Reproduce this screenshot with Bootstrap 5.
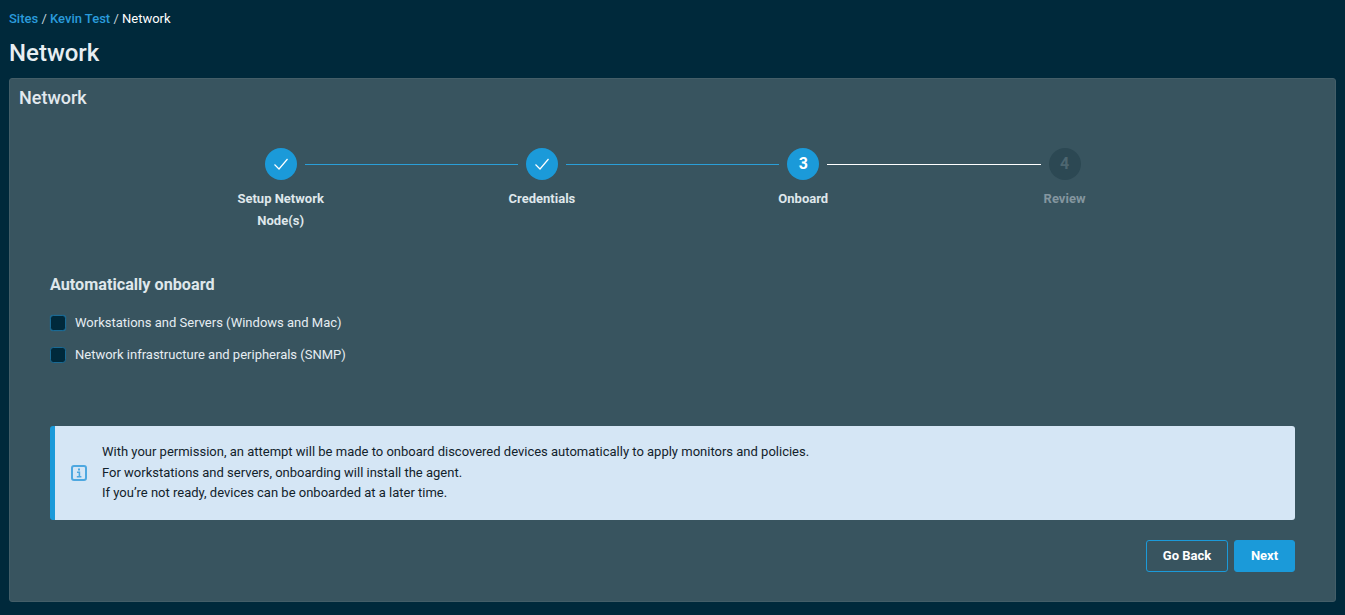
<!DOCTYPE html>
<html>

<head>
  <meta charset="utf-8">
  <meta name="viewport" content="width=device-width">
  <title>Network</title>
  <link href="https://cdn.jsdelivr.net/npm/bootstrap@5.3.2/dist/css/bootstrap.min.css" rel="stylesheet" type="text/css" />
  <script src="https://cdn.jsdelivr.net/npm/bootstrap@5.3.2/dist/js/bootstrap.bundle.min.js"></script>
  <style>
    html, body {
      height: 100%;
    }

    body {
      background: #00293b;
      color: #e6edf2;
      font-family: Roboto, sans-serif;
      font-size: 13px;
      overflow: hidden;
    }

    .page-wrap {
      padding: 9px 9px 0;
    }

    .crumbs {
      height: 19px;
      line-height: 19px;
      margin-bottom: 11px;
      color: #c4d2da;
    }

    .crumbs a {
      color: #2a9bdc;
      text-decoration: none;
      font-weight: 500;
    }

    .crumbs span {
      color: #fff;
      font-weight: 400;
    }

    .page-title {
      font-size: 24px;
      font-weight: 500;
      line-height: 28px;
      margin: 0 0 11px;
      color: #e8eef2;
    }

    .net-panel {
      background: #38545f;
      border: 1px solid #445e68;
      border-radius: 3px;
      height: 524px;
      padding: 8px 40px 0 9px;
      color: #e6edf2;
    }

    .panel-title {
      font-size: 18px;
      font-weight: 500;
      line-height: 22px;
      margin: 0;
      color: #e2e9ee;
    }

    .step-wrap {
      width: 1044px;
      margin-left: 131px;
    }

    .step-track {
      padding: 39px 113.5px 0 115px;
    }

    .step-dot {
      width: 32px;
      height: 32px;
      border-radius: 50%;
      background: #1b9ad9;
      color: #fff;
      font-size: 16px;
      font-weight: 700;
      flex-shrink: 0;
    }

    .step-dot.todo {
      background: #2c4853;
      color: #4d6670;
    }

    .step-line {
      height: 1px;
      margin: 0 8px;
      background: #2a9fd8;
    }

    .step-line.now {
      background: #fff;
    }

    .step-names {
      display: grid;
      grid-template-columns: repeat(4, 261.3px);
      margin-top: 8px;
      text-align: center;
      font-weight: 700;
      line-height: 22px;
      color: #dfe7eb;
    }

    .step-names div {
      width: 110px;
      margin: 0 auto;
    }

    .step-names .off {
      color: #84969f;
    }

    .onboard-area {
      margin-left: 31px;
    }

    .onboard-title {
      font-size: 16.2px;
      font-weight: 700;
      line-height: 20px;
      margin: 43px 0 12px;
      color: #dfe7eb;
    }

    .chk-row {
      height: 32px;
      gap: 9px;
      font-size: 13px;
      font-weight: 400;
      color: #e6edf2;
    }

    .chk-box {
      width: 16px;
      height: 16px;
      margin: 0;
      background: #00293b;
      border: 1px solid #1a6a94;
      border-radius: 2px;
      flex-shrink: 0;
    }

    .chk-box.lit {
      box-shadow: 0 0 1px 0 #1b7fb5;
    }

    .info-box {
      height: 94px;
      margin: 55px 0 20px;
      background: #d5e6f5;
      border-left: 5px solid #1b9ad9;
      border-radius: 3px;
      color: #12222b;
      line-height: 20.5px;
      gap: 15px;
      padding-left: 16px;
    }

    .info-box svg {
      flex-shrink: 0;
    }

    .wiz-btn {
      height: 32px;
      padding: 0;
      font-size: 13px;
      font-weight: 700;
      border-radius: 3px;
      color: #fff;
    }

    .btn-row {
      gap: 6px;
    }

    .btn-back {
      width: 82px;
      background: transparent;
      border: 1px solid #1b9ad9;
    }

    .btn-next {
      width: 61px;
      background: #1b9ad9;
      border: 1px solid #1b9ad9;
    }
  </style>
</head>

<body>
  <div class="page-wrap">
    <nav class="crumbs"><a href="#">Sites</a> / <a href="#">Kevin Test</a> / <span>Network</span></nav>
    <h1 class="page-title">Network</h1>

    <div class="net-panel">
      <h2 class="panel-title">Network</h2>

      <div class="step-wrap">
        <div class="step-track d-flex align-items-center">
          <div class="step-dot d-flex align-items-center justify-content-center">
            <svg width="16" height="16" viewBox="0 0 16 16" fill="none" stroke="#fff" stroke-width="1.2"><path d="M1.5 8.5l4.5 4.5 8.5-10" /></svg>
          </div>
          <div class="step-line flex-grow-1"></div>
          <div class="step-dot d-flex align-items-center justify-content-center">
            <svg width="16" height="16" viewBox="0 0 16 16" fill="none" stroke="#fff" stroke-width="1.2"><path d="M1.5 8.5l4.5 4.5 8.5-10" /></svg>
          </div>
          <div class="step-line flex-grow-1"></div>
          <div class="step-dot d-flex align-items-center justify-content-center">3</div>
          <div class="step-line now flex-grow-1"></div>
          <div class="step-dot todo d-flex align-items-center justify-content-center">4</div>
        </div>
        <div class="step-names">
          <div>Setup Network Node(s)</div>
          <div>Credentials</div>
          <div>Onboard</div>
          <div class="off">Review</div>
        </div>
      </div>

      <div class="onboard-area">
        <h3 class="onboard-title">Automatically onboard</h3>
        <label class="chk-row d-flex align-items-center">
          <input class="chk-box lit form-check-input" type="checkbox">
          Workstations and Servers (Windows and Mac)
        </label>
        <label class="chk-row d-flex align-items-center">
          <input class="chk-box form-check-input" type="checkbox">
          Network infrastructure and peripherals (SNMP)
        </label>

        <div class="info-box d-flex align-items-center">
          <svg width="16" height="16" viewBox="0 0 16 16" fill="none">
            <rect x="1" y="1" width="14" height="14" rx="2" stroke="#4ea8e0" stroke-width="2" />
            <path d="M8 3.6v2" stroke="#4ea8e0" stroke-width="2" />
            <path d="M6 7.2h2.4v4.2M5.8 11.7h4.6" stroke="#4ea8e0" stroke-width="1.6" />
          </svg>
          <div>
            With your permission, an attempt will be made to onboard discovered devices automatically to apply monitors and policies.<br>
            For workstations and servers, onboarding will install the agent.<br>
            If you’re not ready, devices can be onboarded at a later time.
          </div>
        </div>

        <div class="btn-row d-flex justify-content-end">
          <button type="button" class="btn wiz-btn btn-back">Go Back</button>
          <button type="button" class="btn wiz-btn btn-next">Next</button>
        </div>
      </div>
    </div>
  </div>
</body>

</html>
